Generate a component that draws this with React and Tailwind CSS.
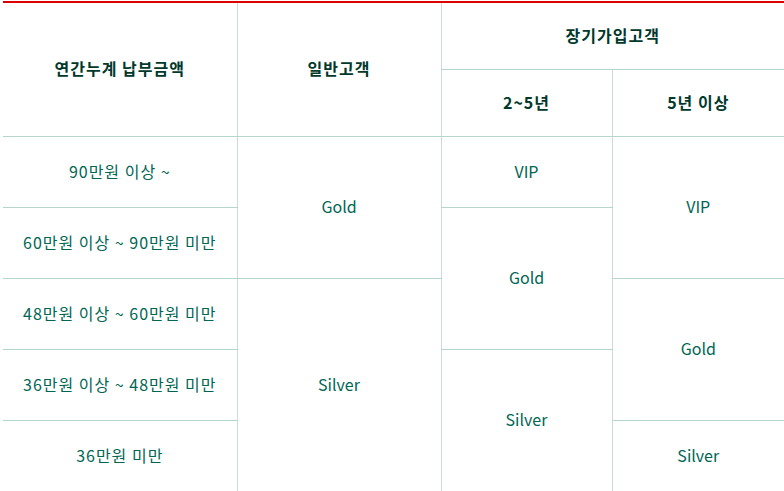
export default function App() {
  const f = { fontFamily: '"Noto Sans CJK KR", "Noto Sans", sans-serif' };
  const th = "border-b border-[#b5d6cc] border-l border-l-[#cbdcd7] text-[16px] font-bold tracking-[1px] text-[#00382c] text-center align-middle px-0 pt-0 pb-[2px]";
  const td = "border-b border-[#b5d6cc] border-l border-l-[#cbdcd7] text-[16px] text-[#006654] text-center align-middle px-0 pt-0 pb-[2px]";
  const td1 = td + " border-l-0 tracking-[1px]";
  return (
    <div className="w-[784px] h-[491px] bg-white pt-px pl-[3px]" style={f}>
      <table className="w-[781px] border-collapse table-fixed border-t-2 border-t-[#dd0000]">
        <colgroup>
          <col className="w-[234px]" />
          <col className="w-[204px]" />
          <col className="w-[171px]" />
          <col className="w-[172px]" />
        </colgroup>
        <thead>
          <tr className="h-[67px]">
            <th rowSpan={2} className={th + " border-l-0"}>연간누계 납부금액</th>
            <th rowSpan={2} className={th}>일반고객</th>
            <th colSpan={2} className={th}>장기가입고객</th>
          </tr>
          <tr className="h-[67px]">
            <th className={th}>2~5년</th>
            <th className={th}>5년 이상</th>
          </tr>
        </thead>
        <tbody>
          <tr className="h-[71px]">
            <td className={td1}>90만원 이상 ~</td>
            <td rowSpan={2} className={td}>Gold</td>
            <td className={td}>VIP</td>
            <td rowSpan={2} className={td}>VIP</td>
          </tr>
          <tr className="h-[71px]">
            <td className={td1}>60만원 이상 ~ 90만원 미만</td>
            <td rowSpan={2} className={td}>Gold</td>
          </tr>
          <tr className="h-[71px]">
            <td className={td1}>48만원 이상 ~ 60만원 미만</td>
            <td rowSpan={3} className={td + " border-b-0"}>Silver</td>
            <td rowSpan={2} className={td}>Gold</td>
          </tr>
          <tr className="h-[71px]">
            <td className={td1}>36만원 이상 ~ 48만원 미만</td>
            <td rowSpan={2} className={td + " border-b-0"}>Silver</td>
          </tr>
          <tr className="h-[71px]">
            <td className={td1 + " border-b-0"}>36만원 미만</td>
            <td className={td + " border-b-0"}>Silver</td>
          </tr>
        </tbody>
      </table>
    </div>
  );
}
